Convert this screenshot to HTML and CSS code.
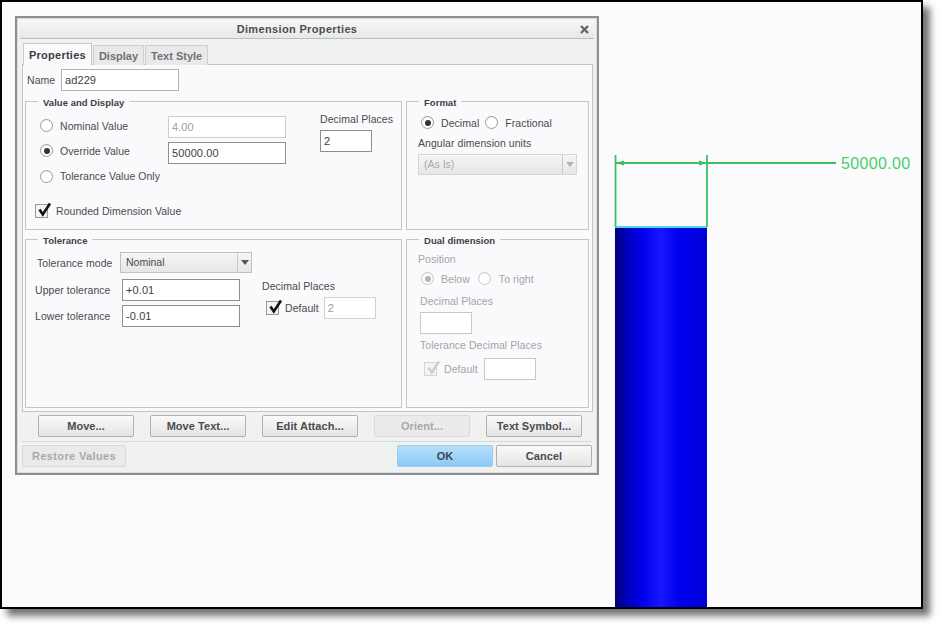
FILE: index.html
```html
<!DOCTYPE html>
<html lang="en">
<head>
<meta charset="utf-8">
<title>Dimension Properties</title>
<link rel="stylesheet" href="styles.css">
</head>
<body>
<main class="viewport">
  <svg class="model" width="919" height="605" viewBox="2 2 919 605" aria-label="Model view">
    <defs>
      <linearGradient id="cyl" x1="0" x2="1" y1="0" y2="0">
        <stop offset="0" stop-color="#000078"/>
        <stop offset=".12" stop-color="#0000b8"/>
        <stop offset=".3" stop-color="#0000ee"/>
        <stop offset=".5" stop-color="#1616ff"/>
        <stop offset=".7" stop-color="#0000f0"/>
        <stop offset="1" stop-color="#0000d8"/>
      </linearGradient>
    </defs>
    <rect x="615" y="228" width="92" height="379" fill="url(#cyl)"/>
    <path d="M615 227H707" stroke="#18c4dc" stroke-width="1.5"/>
    <path d="M615.5 155V227M707 155V227M616 163H836" stroke="#3cc060" stroke-width="1.8" fill="none"/>
    <path d="M616 163L624 160.5V165.5ZM707 163L699 160.5V165.5Z" fill="#3cc060"/>
    <text x="841" y="169" class="dim-text">50000.00</text>
  </svg>

  <section class="dialog">
    <header class="titlebar">
      <h1 class="title">Dimension Properties</h1>
      <svg class="close" width="9" height="9" viewBox="0 0 9 9"><path d="M1 1L8 8M8 1L1 8" stroke="#666" stroke-width="2.4"/></svg>
    </header>

    <nav class="tabs">
      <span class="tab active">Properties</span>
      <span class="tab">Display</span>
      <span class="tab">Text Style</span>
    </nav>

    <div class="panel">
      <div class="name-row">
        <label class="lbl">Name</label>
        <span class="input w118">ad229</span>
      </div>

      <div class="groups">
        <div class="group value-group">
          <span class="legend">Value and Display</span>
          <div class="value-main">
            <div class="value-rows">
              <div class="vrow vrow1">
                <span class="radio"></span><span class="lbl rlabel">Nominal Value</span>
                <span class="input w118 dim">4.00</span>
              </div>
              <div class="vrow vrow2">
                <span class="radio on"></span><span class="lbl rlabel">Override Value</span>
                <span class="input w118 strong">50000.00</span>
              </div>
              <div class="vrow vrow3">
                <span class="radio"></span><span class="lbl rlabel">Tolerance Value Only</span>
              </div>
            </div>
            <div class="places">
              <span class="lbl">Decimal Places</span>
              <span class="input w52 strong">2</span>
            </div>
          </div>
          <div class="rounded-row">
            <span class="check on"><svg width="16" height="16" viewBox="0 0 16 16"><path d="M3.5 7.5L6.8 12.5L14 1.5" fill="none" stroke="#111" stroke-width="2.6"/></svg></span>
            <span class="lbl">Rounded Dimension Value</span>
          </div>
        </div>

        <div class="group format-group">
          <span class="legend">Format</span>
          <div class="radio-line">
            <span class="radio on"></span><span class="lbl">Decimal</span>
            <span class="radio"></span><span class="lbl">Fractional</span>
          </div>
          <div class="lbl angular">Angular dimension units</div>
          <div class="select dim-select">
            <span class="sel-text">(As Is)</span>
            <span class="sel-btn"><i class="caret"></i></span>
          </div>
        </div>

        <div class="group tol-group">
          <span class="legend">Tolerance</span>
          <div class="tol-main">
            <div class="tol-left">
              <div class="tol-mode">
                <span class="lbl">Tolerance mode</span>
                <div class="select mode-select">
                  <span class="sel-text">Nominal</span>
                  <span class="sel-btn"><i class="caret"></i></span>
                </div>
              </div>
              <div class="tol-row">
                <span class="lbl tol-lbl">Upper tolerance</span>
                <span class="input w118 strong">+0.01</span>
              </div>
              <div class="tol-row">
                <span class="lbl tol-lbl">Lower tolerance</span>
                <span class="input w118 strong">-0.01</span>
              </div>
            </div>
            <div class="tol-right">
              <span class="lbl">Decimal Places</span>
              <div class="default-row">
                <span class="check on"><svg width="16" height="16" viewBox="0 0 16 16"><path d="M3.5 7.5L6.8 12.5L14 1.5" fill="none" stroke="#111" stroke-width="2.6"/></svg></span>
                <span class="lbl">Default</span>
                <span class="input w52 dim">2</span>
              </div>
            </div>
          </div>
        </div>

        <div class="group dual-group">
          <span class="legend">Dual dimension</span>
          <div class="lbl off dual-pos">Position</div>
          <div class="radio-line dual-radios">
            <span class="radio on off"></span><span class="lbl off">Below</span>
            <span class="radio off"></span><span class="lbl off">To right</span>
          </div>
          <div class="dual-inner">
            <div class="lbl off">Decimal Places</div>
            <span class="input w52 blank"></span>
            <div class="lbl off dual-tol">Tolerance Decimal Places</div>
            <div class="default-row dual-default">
              <span class="check off"><svg width="16" height="16" viewBox="0 0 16 16"><path d="M3.5 7.5L6.8 12.5L14 1.5" fill="none" stroke="#cdd0d2" stroke-width="2.6"/></svg></span>
              <span class="lbl off">Default</span>
              <span class="input w52 blank"></span>
            </div>
          </div>
        </div>
      </div>
    </div>

    <div class="actions">
      <button class="btn">Move...</button>
      <button class="btn">Move Text...</button>
      <button class="btn">Edit Attach...</button>
      <button class="btn disabled">Orient...</button>
      <button class="btn">Text Symbol...</button>
    </div>
    <footer class="footer">
      <button class="btn disabled restore">Restore Values</button>
      <div class="footer-right">
        <button class="btn primary">OK</button>
        <button class="btn">Cancel</button>
      </div>
    </footer>
  </section>
</main>
</body>
</html>
```

FILE: styles.css
```css
* { box-sizing: border-box; }
html, body { margin: 0; background: #fff; }
body { width: 940px; height: 626px; overflow: hidden; font-family: "Liberation Sans", Arial, sans-serif; font-size: 10.5px; color: #444; }

.viewport {
  position: relative; width: 923px; height: 609px;
  background: #fbfbfd; border: 2px solid #000;
  box-shadow: 7px 7px 7px rgba(0,0,0,.55);
}
.model { position: absolute; left: 0; top: 0; display: block; }
.dim-text { font-family: "Liberation Sans", sans-serif; font-size: 16px; fill: #45d06a; letter-spacing: .35px; }

.dialog {
  position: absolute; left: 13px; top: 14px; width: 584px; height: 459px;
  background: #f0f1f1; border: 2px solid #8e8e8e;
  padding: 2px 2px 0; box-shadow: inset 0 0 0 1px #dcdcdc;
}
.titlebar {
  height: 19px; display: flex; align-items: center; justify-content: center; position: relative;
  background: linear-gradient(#f7f7f7, #e6e7e8); border-bottom: 1px solid #bdbdbd; margin: 0 1px; padding-right: 20px;
}
.title { margin: 0; font-size: 11px; font-weight: bold; color: #4e4e4e; letter-spacing: .35px; }
.close { position: absolute; right: 5px; top: 5px; }

.tabs { display: flex; align-items: flex-end; height: 26px; padding-left: 4px; margin-bottom: -1px; position: relative; z-index: 1; }
.tab {
  height: 20px; padding: 0 5px; display: flex; align-items: center; font-size: 11px; font-weight: bold; color: #707078;
  background: #e9e9ea; border: 1px solid #d0d0d0; border-bottom: 0; margin-right: 1px;
}
.tab.active { height: 22px; padding: 0 5px; color: #3d3d44; background: #fafafc; border-color: #c8c8c8; letter-spacing: .25px; }

.panel { margin-left: 3px; width: 571px; height: 348px; background: #fafafc; border: 1px solid #c4c4c4; }
.name-row { display: flex; align-items: center; height: 22px; margin-top: 4px; padding-left: 4px; }
.name-row .lbl { width: 34px; }

.lbl { color: #4a4a4e; white-space: nowrap; letter-spacing: .05px; }
.lbl.off { color: #a3a5a8; }

.input {
  display: flex; align-items: center; height: 22px; padding-left: 3px; background: #fff;
  border: 1px solid #b4b4b4; color: #3e3e3e; font-size: 11px; letter-spacing: .1px; flex: none;
}
.input.strong { border-color: #8f8f8f; }
.input.dim { border-color: #cfcfcf; color: #a0a0a0; }
.input.blank { border-color: #c8c8c8; }
.w118 { width: 118px; }
.w52 { width: 52px; }

.groups { display: grid; grid-template-columns: 377px 183px; column-gap: 4px; margin: 10px 0 0 2px; grid-template-rows: 129px 169px; row-gap: 9px; }
.group { position: relative; background: #fafafc; border: 1px solid #c6c6c6; }
.legend { position: absolute; left: 12px; top: -5px; padding: 0 5px; height: 12px; line-height: 12px; background: #fafafc; font-weight: bold; font-size: 9.5px; color: #3f3f46; letter-spacing: .03px; }

.radio {
  display: inline-block; width: 13px; height: 13px; border-radius: 50%; flex: none; position: relative;
  background: radial-gradient(circle at 50% 60%, #fff 55%, #e4e4e4); border: 1px solid #9b9b9b;
}
.radio.on::after { content: ""; position: absolute; left: 2.5px; top: 2.5px; width: 6px; height: 6px; border-radius: 50%; background: #333; }
.radio.off { border-color: #c8c8c8; }
.radio.on.off::after { background: #b4b4b4; }

.check { width: 13px; height: 14px; position: relative; display: block; background: #f4f4f4; border: 1px solid #9a9a9a; flex: none; }
.check.off { border-color: #d4d4d4; }
.check svg { position: absolute; left: 0; top: -3px; }

.value-main { display: flex; padding: 14px 0 0 14px; }
.value-rows { width: 280px; }
.vrow { display: flex; align-items: flex-start; }
.rlabel { width: 108px; margin-left: 7px; margin-top: 4px; }
.vrow1 { height: 26px; }
.vrow1 .radio { margin-top: 3px; }
.vrow2 { height: 26px; }
.vrow2 .radio { margin-top: 2px; }
.vrow2 .rlabel { margin-top: 3px; }
.vrow3 { height: 20px; }
.vrow3 .radio { margin-top: 2px; }
.vrow3 .rlabel { margin-top: 2px; }
.places { display: flex; flex-direction: column; margin-top: -3px; gap: 5px; }
.rounded-row { display: flex; align-items: center; gap: 8px; margin: 16px 0 0 9px; }

.radio-line { display: flex; align-items: center; }
.format-group .radio-line { padding: 14px 0 0 14px; }
.format-group .radio-line .lbl:nth-of-type(2) { margin: 0 6px 0 7px; }
.format-group .radio-line .lbl:last-child { margin-left: 7px; }
.angular { margin: 8px 0 0 11px; }
.select {
  display: flex; align-items: center; height: 21px; border: 1px solid #c0c0c0;
  background: linear-gradient(#f6f6f6, #e6e6e6);
}
.sel-text { flex: 1; padding: 0 0 1px 5px; color: #4a4a4e; }
.sel-btn { width: 14px; height: 100%; display: flex; align-items: center; justify-content: center; border-left: 1px solid #c8c8c8; }
.caret { width: 0; height: 0; border: 4px solid transparent; border-top: 5px solid #555; border-bottom: 0; }
.dim-select { width: 159px; margin: 5px 0 0 11px; border-color: #d6d6d6; }
.dim-select .sel-text { color: #a8a8a8; }
.dim-select .caret { border-top-color: #b4b4b4; }
.mode-select { width: 132px; margin-left: 5px; }

.tol-main { display: flex; padding: 12px 0 0 9px; }
.tol-left { width: 227px; }
.tol-mode { display: flex; align-items: center; padding-left: 2px; }
.tol-mode .lbl { width: 78px; }
.tol-row { display: flex; align-items: center; margin-top: 4px; }
.tol-mode + .tol-row { margin-top: 6px; }
.tol-lbl { width: 87px; }
.tol-right { padding-top: 28px; }
.default-row { display: flex; align-items: center; margin-top: 5px; padding-left: 4px; }
.default-row .lbl { margin: 0 5px 0 6px; }

.dual-pos { margin: 13px 0 0 11px; }
.dual-radios { padding: 7px 0 0 14px; }
.dual-radios .lbl:nth-of-type(2) { margin: 0 8px 0 7px; }
.dual-radios .lbl:last-child { margin-left: 8px; }
.dual-inner { padding: 10px 0 0 13px; }
.dual-inner .input { margin-top: 5px; }
.dual-tol { margin-top: 5px; }
.dual-default { margin-top: 7px; padding-left: 4px; }
.dual-default .input { margin-top: 0; }
.dual-default .lbl { margin: 0 6px 0 7px; }

.btn {
  height: 22px; width: 96px; padding: 0; background: linear-gradient(#fafafa, #e4e4e4); border: 1px solid #b0b0b0; border-radius: 2px;
  font: bold 11px "Liberation Sans", Arial, sans-serif; color: #4a4a50; letter-spacing: .05px;
}
.btn.disabled { background: #eaeaea; border-color: #dadada; color: #a6a8aa; }
.btn.primary { background: linear-gradient(#b6e0fb, #8cc9f6); border-color: #9ccbee; color: #3c4650; }
.actions { display: flex; gap: 16px; padding: 3px 0 4px 16px; border-bottom: 1px solid #d8d8d8; margin: 0 3px; height: 30px; }
.footer { display: flex; justify-content: space-between; padding: 3px 3px 0 3px; }
.restore { width: 104px; letter-spacing: .35px; }
.footer-right { display: flex; gap: 3px; }
```
